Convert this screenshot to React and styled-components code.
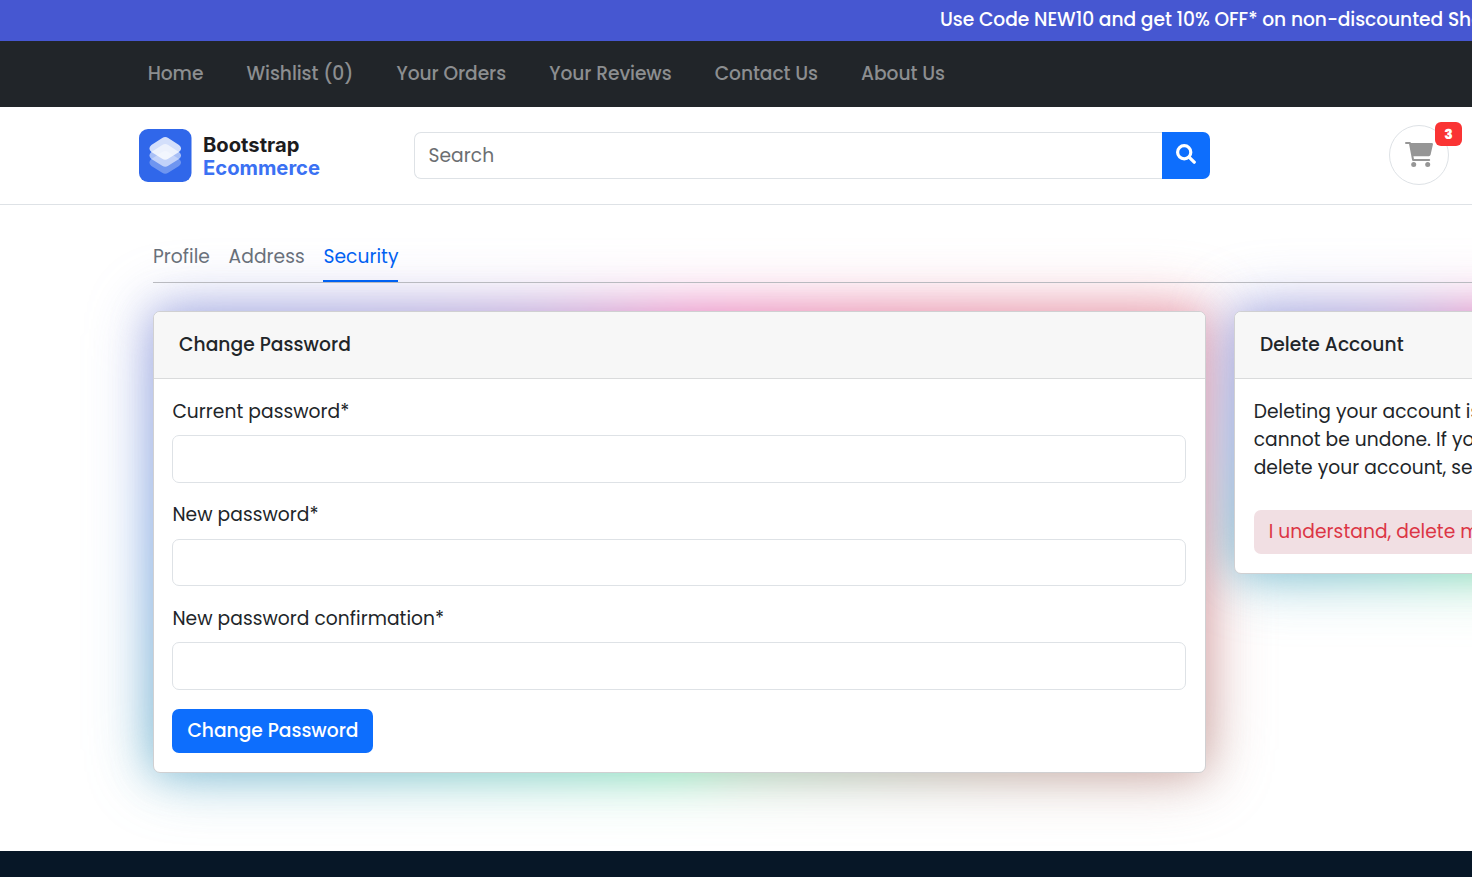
import React from "react";
import styled, { createGlobalStyle } from "styled-components";

const GlobalStyle = createGlobalStyle`
  *, *::before, *::after { box-sizing: border-box; }
  body {
    margin: 0;
    overflow: hidden;
    background: #fff;
    color: #212529;
    font: 400 18.67px/28px Poppins, Inter, "Open Sans", sans-serif;
    letter-spacing: 0.05px;
  }
  button, input { font: inherit; letter-spacing: inherit; }
`;

const Page = styled.div`
  display: flex;
  flex-direction: column;
  width: 100%;
  height: 100vh;
  overflow: hidden;
`;

const PromoBar = styled.div`
  flex: none;
  height: 41px;
  padding: 6px 0 0 940px;
  background: #4657d1;
  color: #fff;
  font-weight: 500;
  letter-spacing: -0.06px;
  white-space: nowrap;
`;

const Nav = styled.nav`
  flex: none;
  display: flex;
  align-items: center;
  gap: 43.2px;
  height: 66px;
  padding-left: 147.7px;
  background: #212529;
`;

const NavLink = styled.a`
  color: #8c8e90;
  font-weight: 500;
  letter-spacing: -0.07px;
  white-space: nowrap;
`;

const Header = styled.header`
  flex: none;
  display: flex;
  align-items: center;
  height: 98px;
  padding-left: 139px;
  border-bottom: 1px solid #dee2e6;
  background: #fff;
`;

const Brand = styled.a`
  display: flex;
  align-items: center;
  gap: 11px;
  width: 275px;
`;

const BrandMark = styled.svg`
  width: 53px;
  height: 53px;
`;

const BrandName = styled.span`
  display: grid;
  font: 700 20.2px/23px Inter, sans-serif;
  letter-spacing: 0;
  color: #1c1c1e;
`;

const BrandAccent = styled.span`
  color: #3b71f3;
`;

const SearchForm = styled.form`
  display: flex;
  width: 796px;
  height: 47px;
`;

const SearchInput = styled.input`
  flex: 1;
  min-width: 0;
  padding: 0 13.5px;
  border: 1px solid #dee2e6;
  border-right: 0;
  border-radius: 7px 0 0 7px;
  outline: 0;
  &::placeholder { color: #6b6e71; opacity: 1; }
`;

const SearchButton = styled.button`
  display: grid;
  place-items: center;
  width: 48px;
  padding: 0 0 3px;
  border: 0;
  border-radius: 0 7px 7px 0;
  background: #0d6efd;
  color: #fff;
`;

const CartButton = styled.a`
  position: relative;
  display: grid;
  place-items: center;
  width: 60px;
  height: 60px;
  margin: 0 0 2px 179px;
  border: 1px solid #dee2e6;
  border-radius: 50%;
  color: #969696;
`;

const CartCount = styled.span`
  position: absolute;
  top: -4px;
  right: -14px;
  width: 27px;
  height: 24px;
  border-radius: 6px;
  background: #fa3434;
  color: #fff;
  font-size: 14px;
  font-weight: 800;
  line-height: 24px;
  text-align: center;
`;

const Main = styled.main`
  flex: none;
  width: 1746px;
  height: 646px;
  padding: 38px 0 0 153px;
  position: relative;
  isolation: isolate;
`;

const Tabs = styled.div`
  display: flex;
  gap: 18.67px;
  height: 40px;
  border-bottom: 1px solid #b9bac0;
`;

const Tab = styled.a`
  height: 39px;
  color: ${(p) => (p.$active ? "#0061f2" : "#69707a")};
  border-bottom: 2px solid ${(p) => (p.$active ? "#0061f2" : "transparent")};
  white-space: nowrap;
`;

const Cards = styled.div`
  display: grid;
  grid-template-columns: 1053px 511px;
  gap: 28px;
  align-items: start;
  margin-top: 28px;
`;

const Card = styled.section`
  position: relative;
  &::before,
  &::after {
    content: "";
    position: absolute;
    inset: 0;
    z-index: -1;
    border-radius: 7px;
    background: conic-gradient(
      #e06cb6 0deg, #e567b1 8deg, #e37495 50deg, #e07f93 66deg, #d98791 90deg,
      #bf938d 113deg, #a1ab99 138deg, #8fc09f 165deg, #69d9a5 181deg,
      #66c0bd 225deg, #61abc9 247deg, #6f9bdd 270deg, #8b93d9 294deg,
      #a988cc 325deg, #e06cb6 360deg
    );
    opacity: 0.58;
  }
  &::before { filter: blur(20px); }
  &::after { filter: blur(33px); }
`;

const CardSurface = styled.div`
  border: 1px solid #d0d0d2;
  border-radius: 7px;
  overflow: hidden;
  background: #fff;
`;

const CardHeader = styled.h2`
  height: 67px;
  margin: 0;
  padding: 19px 25px;
  border-bottom: 1px solid #dadbdc;
  background: #f7f7f7;
  font-size: 18.67px;
  font-weight: 500;
`;

const CardBody = styled.div`
  padding: 18.67px 18.67px 18.67px 18.4px;
`;

const Field = styled.div`
  margin-bottom: 18.67px;
`;

const FieldLabel = styled.label`
  display: block;
  margin-bottom: 9.33px;
`;

const FieldInput = styled.input`
  display: block;
  width: 100%;
  height: 47.75px;
  border: 1px solid #dee2e6;
  border-radius: 7px;
  background: #fff;
`;

const Button = styled.button`
  display: block;
  height: 44px;
  padding: 0 15px;
  border: 0;
  border-radius: 7px;
  background: ${(p) => (p.$danger ? "#f1dfe3" : "#0d6efd")};
  color: ${(p) => (p.$danger ? "#dc3545" : "#fff")};
  font-weight: ${(p) => (p.$danger ? 400 : 500)};
  letter-spacing: ${(p) => (p.$danger ? "0.05px" : "0")};
  white-space: nowrap;
`;

const Notice = styled.p`
  margin: 0 0 28.4px;
  white-space: nowrap;
`;

const AccountBody = styled(CardBody)`
  padding-left: 18.67px;
`;

const Footer = styled.footer`
  position: relative;
  flex: 1;
  background: #071727;
`;

const SearchIcon = () => (
  <svg width="20" height="20" viewBox="0 0 20 20" fill="none" stroke="currentColor" aria-hidden="true">
    <circle cx="8.2" cy="8.2" r="6.6" strokeWidth="3.2" />
    <path d="M13.3 13.3L18.2 18.2" strokeWidth="3.3" strokeLinecap="round" />
  </svg>
);

const CartIcon = () => (
  <svg width="28" height="25" viewBox="0 0 28 25" aria-hidden="true">
    <path d="M1 1H4.9L8.1 18H24.2" fill="none" stroke="currentColor" strokeWidth="2" strokeLinecap="round" strokeLinejoin="round" />
    <path d="M5 1H26.7Q28.3 1 27.9 2.6L25.6 12.8Q25.2 14.2 23.8 14.2H7.4Z" fill="currentColor" />
    <circle cx="8.7" cy="22.5" r="2.5" fill="currentColor" />
    <circle cx="22.7" cy="22.5" r="2.5" fill="currentColor" />
  </svg>
);

const LAYER = "M23.2 9Q26.2 7.2 29.2 9L40 16Q44.2 19.5 40 23L29.2 29.8Q26.2 31.8 23.2 29.8L12.4 23Q8.4 19.5 12.4 16Z";

const links = ["Home", "Wishlist (0)", "Your Orders", "Your Reviews", "Contact Us", "About Us"];
const tabs = ["Profile", "Address", "Security"];
const fields = ["Current password*", "New password*", "New password confirmation*"];

export default function App() {
  return (
    <Page>
      <GlobalStyle />
      <PromoBar>Use Code NEW10 and get 10% OFF* on non-discounted Shoes</PromoBar>
      <Nav>
        {links.map((text) => (
          <NavLink key={text}>{text}</NavLink>
        ))}
      </Nav>
      <Header>
        <Brand>
          <BrandMark viewBox="0 0 53 53" aria-hidden="true">
            <rect width="52.5" height="53" rx="9" fill="#3067ea" />
            <path d={LAYER} transform="translate(0 14)" fill="#fff" opacity=".3" />
            <path d={LAYER} transform="translate(0 7)" fill="#fff" opacity=".58" />
            <path d={LAYER} fill="#fff" opacity=".79" />
          </BrandMark>
          <BrandName>
            Bootstrap
            <BrandAccent>Ecommerce</BrandAccent>
          </BrandName>
        </Brand>
        <SearchForm>
          <SearchInput placeholder="Search" />
          <SearchButton type="button" aria-label="Search"><SearchIcon /></SearchButton>
        </SearchForm>
        <CartButton>
          <CartIcon />
          <CartCount>3</CartCount>
        </CartButton>
      </Header>
      <Main>
        <Tabs>
          {tabs.map((text) => (
            <Tab key={text} $active={text === "Security"}>{text}</Tab>
          ))}
        </Tabs>
        <Cards>
          <Card>
            <CardSurface>
              <CardHeader>Change Password</CardHeader>
              <CardBody>
                {fields.map((text) => (
                  <Field key={text}>
                    <FieldLabel>{text}</FieldLabel>
                    <FieldInput type="password" />
                  </Field>
                ))}
                <Button type="button">Change Password</Button>
              </CardBody>
            </CardSurface>
          </Card>
          <Card>
            <CardSurface>
              <CardHeader>Delete Account</CardHeader>
              <AccountBody>
                <Notice>
                  Deleting your account is a permanent action and<br />
                  cannot be undone. If you are sure you want to<br />
                  delete your account, select the button below.
                </Notice>
                <Button type="button" $danger>I understand, delete my account</Button>
              </AccountBody>
            </CardSurface>
          </Card>
        </Cards>
      </Main>
      <Footer />
    </Page>
  );
}
